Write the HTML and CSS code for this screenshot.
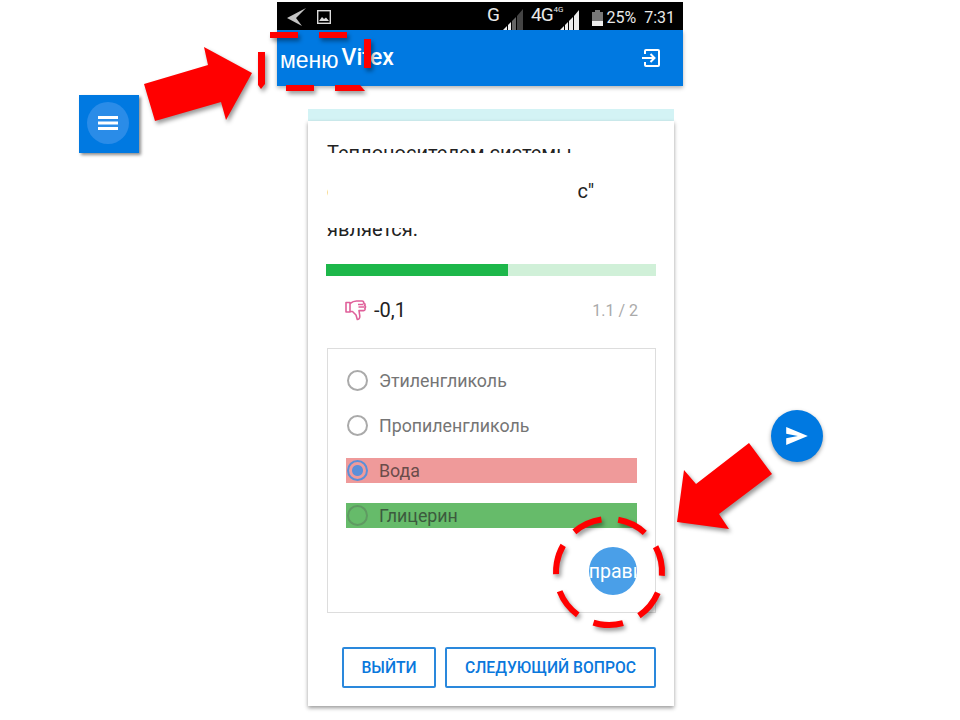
FILE: index.html
```html
<!DOCTYPE html>
<html lang="ru">
<head>
    <meta charset="UTF-8">
    <meta name="viewport" content="width=device-width, initial-scale=1.0">
    <title>Vitex</title>
    <link rel="stylesheet" href="styles.css">
</head>
<body>
    <div class="phone">
        <!-- Статус-бар -->
        <div class="status-bar">
            <svg class="back-icon" width="20" height="20" viewBox="0 0 20 20"><path d="M19 1 L0 11 L15 19 L9 11 Z" fill="#c4c4c4"/></svg>
            <svg class="pic-icon" width="14" height="14" viewBox="0 0 14 14"><rect x="0.7" y="0.7" width="12.6" height="12.6" fill="none" stroke="#ddd" stroke-width="1.4"/><path d="M2 11 L5 7 L7 9 L9 7.5 L12 11 Z" fill="#ddd"/></svg>
            <span class="status-g">G</span>
            <svg class="signal-a" width="20" height="22" viewBox="0 0 20 22"><path d="M0 22 L4 18 L4 22 Z" fill="#eee"/><path d="M5 17 L8 14 L8 22 L5 22 Z" fill="#eee"/><path d="M9 13 L13 9 L13 22 L9 22 Z" fill="#666"/><path d="M14 8 L20 1 L20 22 L14 22 Z" fill="#444"/></svg>
            <span class="status-4g">4G</span>
            <span class="status-4g-small">4G</span>
            <svg class="signal-b" width="20" height="22" viewBox="0 0 20 22"><path d="M0 22 L4 18 L4 22 Z" fill="#eee"/><path d="M5 17 L8 14 L8 22 L5 22 Z" fill="#eee"/><path d="M9 13 L13 9 L13 22 L9 22 Z" fill="#eee"/><path d="M14 8 L19 2 L19 22 L14 22 Z" fill="#eee"/></svg>
            <svg class="battery" width="11" height="16" viewBox="0 0 11 16"><rect x="3" y="0" width="5" height="2" fill="#777"/><rect x="0" y="2" width="11" height="14" fill="#777"/><rect x="0" y="11" width="11" height="5" fill="#eee"/></svg>
            <span class="status-text status-pct">25%</span>
            <span class="status-text status-time">7:31</span>
        </div>

        <!-- Шапка -->
        <div class="app-bar">
            <span class="menu-label">меню</span>
            <span class="brand">Vitex</span>
            <svg class="exit-icon" width="20" height="18" viewBox="0 0 20 18" fill="none" stroke="#fff" stroke-width="2"><path d="M4 5 V2 a1 1 0 0 1 1 -1 H17 a1 1 0 0 1 1 1 V16 a1 1 0 0 1 -1 1 H5 a1 1 0 0 1 -1 -1 V13"/><path d="M1 9 H13"/><path d="M9.5 5 L13.5 9 L9.5 13"/></svg>
        </div>

        <div class="strip"></div>

        <!-- Карточка вопроса -->
        <div class="card">
            <div class="question">
                <div class="q-line">Теплоносителем системы</div>
                <div class="q-line q-split"><span>с</span><span>с"</span></div>
                <div class="q-line">является.</div>
                <div class="q-cover"></div>
            </div>

            <div class="progress"><div class="progress-fill" style="width: 55%"></div></div>

            <div class="score-row">
                <svg class="thumb" width="22" height="22" viewBox="0 0 22 22" fill="none" stroke="#e0609a" stroke-width="1.6" stroke-linejoin="round"><path d="M1 3.5 H5 V13 H1 Z"/><path d="M5 4.5 C7 3 9 2 11.5 2 H17 C18.5 2 19 3 18.5 4 C20 4.2 20.5 5.5 19.6 6.5 C20.8 7 20.8 8.6 19.8 9.2 C20.5 10 20 11.6 18.6 11.6 H14 L14.8 17 C15 19.5 13.5 20.5 12.3 20.5 L11 16 L7.5 12.5 H5"/><path d="M13 5.5 H18.5 M13.5 8 H19.5"/></svg>
                <span class="score">-0,1</span>
                <span class="counter">1.1 / 2</span>
            </div>

            <div class="answers">
                <div class="option"><span class="radio"></span>Этиленгликоль</div>
                <div class="option"><span class="radio"></span>Пропиленгликоль</div>
                <div class="option option-wrong"><span class="radio radio-on"></span>Вода</div>
                <div class="option option-right"><span class="radio"></span>Глицерин</div>
                <div class="send-fab"><span>Отправить</span></div>
            </div>

            <div class="actions">
                <button class="btn btn-exit">ВЫЙТИ</button>
                <button class="btn btn-next">СЛЕДУЮЩИЙ ВОПРОС</button>
            </div>
        </div>
    </div>

    <!-- Кнопки-подсказки сбоку -->
    <div class="hint-menu">
        <div class="hint-menu-circle">
            <svg width="20" height="14" viewBox="0 0 20 14" fill="#fff"><rect y="0" width="20" height="3"/><rect y="5.5" width="20" height="3"/><rect y="11" width="20" height="3"/></svg>
        </div>
    </div>
    <div class="hint-send">
        <svg width="22" height="18" viewBox="0 0 24 20"><path d="M0 0 L24 10 L0 20 L0 12.5 L13 10 L0 7.5 Z" fill="#fff"/></svg>
    </div>

    <!-- Стрелки и пунктир поверх скриншота -->
    <svg class="marks" width="960" height="720" viewBox="0 0 960 720">
        <g fill="#f00">
            <polygon points="144,84 155,121 221,102 226,120 252,73 204,47 208,65"/>
            <polygon points="749,443 772,474 719,514 729,529 677,522 684,470 696,484"/>
            <polygon points="258,52 265,52 265,84 261,89 258,85"/>
            <rect x="270" y="32" width="28" height="6"/>
            <rect x="319" y="32" width="28" height="6"/>
            <rect x="364" y="39" width="7" height="29"/>
            <rect x="286" y="85" width="28" height="6"/>
            <polygon points="335,85 360,85 365,91 335,91"/>
        </g>
        <circle cx="609" cy="572" r="53" fill="none" stroke="#f00" stroke-width="6" stroke-dasharray="30 17.6" transform="rotate(-80 609 572)"/>
    </svg>
</body>
</html>
```

FILE: styles.css
```css
body {
    margin: 0;
    width: 960px;
    height: 720px;
    position: relative;
    overflow: hidden;
    background-color: #fff;
    font-family: Roboto, "Liberation Sans", sans-serif;
}

.phone {
    width: 406px;
    margin-left: 277px;
    padding-top: 2px;
}

/* status bar */
.status-bar {
    height: 28px;
    background-color: #000;
    color: #e8e8e8;
    display: flex;
    align-items: center;
    position: relative;
}

.back-icon {
    margin-left: 10px;
    margin-top: 2px;
}

.pic-icon {
    margin-left: 10px;
    margin-top: 1px;
}

.status-g {
    font-size: 19px;
    margin-left: 156px;
    margin-top: -4px;
}

.signal-a {
    margin-left: 3px;
    margin-top: 5px;
}

.status-4g {
    font-size: 19px;
    margin-left: 8px;
    margin-top: -4px;
    letter-spacing: -1px;
}

.status-4g-small {
    font-size: 8px;
    margin-top: -14px;
    margin-left: 1px;
}

.signal-b {
    margin-left: -4px;
    margin-top: 5px;
}

.battery {
    margin-left: 12px;
    margin-top: 3px;
}

.status-text {
    font-size: 16px;
    margin-top: 2px;
}

.status-pct {
    margin-left: 4px;
}

.status-time {
    margin-left: 8px;
}

/* app bar */
.app-bar {
    height: 56px;
    background-color: #0079e1;
    color: #fff;
    display: flex;
    align-items: center;
    box-shadow: 0 2px 4px rgba(0, 0, 0, 0.3);
}

.menu-label {
    font-family: "Liberation Sans", sans-serif;
    font-size: 23px;
    margin-left: 3px;
    margin-top: 5px;
}

.brand {
    font-size: 23px;
    font-weight: 500;
    margin-left: 3px;
    margin-top: -1px;
}

.exit-icon {
    margin-left: auto;
    margin-right: 22px;
    margin-top: -1px;
}

.strip {
    height: 12px;
    background-color: #d3f3f5;
    margin: 23px 9px 0 31px;
}

/* card */
.card {
    width: 366px;
    height: 585px;
    margin-left: 31px;
    box-sizing: border-box;
    padding: 13px 18px 0;
    background-color: #fff;
    box-shadow: 0 2px 4px rgba(0, 0, 0, 0.4);
}

.question {
    position: relative;
    padding-left: 1px;
    font-size: 20px;
    line-height: 38px;
    color: #222;
    height: 114px;
}

.q-split {
    display: flex;
    gap: 240px;
}

.q-cover {
    position: absolute;
    left: 2px;
    top: 19px;
    width: 250px;
    height: 75px;
    background-color: #fff;
}

.progress {
    height: 12px;
    margin-top: 16px;
    background-color: #d0f0d8;
}

.progress-fill {
    height: 100%;
    background-color: #1db74a;
}

.score-row {
    display: flex;
    align-items: center;
    height: 28px;
    margin-top: 20px;
    padding: 0 18px 0 19px;
}

.thumb {
    margin-right: 7px;
}

.score {
    font-size: 20px;
    color: #222;
}

.counter {
    margin-left: auto;
    font-size: 16px;
    color: #aaa;
}

.answers {
    position: relative;
    height: 265px;
    box-sizing: border-box;
    margin: 24px 0 0 1px;
    padding: 19px 18px 0;
    border: 1px solid #ddd;
    display: flex;
    flex-direction: column;
    gap: 20px;
}

.option {
    height: 25px;
    display: flex;
    align-items: center;
    gap: 11px;
    font-size: 17.8px;
    color: #757575;
}

.radio {
    width: 17px;
    height: 17px;
    margin-left: 1px;
    border: 2px solid #aaa;
    border-radius: 50%;
    flex-shrink: 0;
}

.radio-on {
    border-color: #5b8fd8;
    background: radial-gradient(circle, #5b8fd8 0 5px, transparent 6px);
}

.option-wrong {
    background-color: #ef9a9a;
    color: #6a4c4a;
}

.option-right {
    background-color: #66bb6a;
    color: #3c5a3e;
}

.option-right .radio {
    border-color: #5f9a62;
}

.send-fab {
    position: absolute;
    left: 261px;
    top: 198px;
    width: 48px;
    height: 48px;
    border-radius: 50%;
    background-color: #4a9fe8;
    color: #fff;
    font-size: 19.5px;
    display: flex;
    align-items: center;
    justify-content: center;
    overflow: hidden;
    white-space: nowrap;
}

.send-fab span {
    margin-left: 4px;
}

.actions {
    display: flex;
    justify-content: flex-end;
    gap: 9px;
    margin-top: 34px;
}

.btn {
    height: 41px;
    padding: 0;
    background-color: #fff;
    border: 2px solid #2a88dc;
    border-radius: 2px;
    color: #0a78dc;
    font-family: Roboto, sans-serif;
    font-size: 15.7px;
    font-weight: 500;
}

.btn-exit {
    width: 94px;
}

.btn-next {
    width: 211px;
}

/* hints left and right of the phone */
.hint-menu {
    position: absolute;
    left: 79px;
    top: 95px;
    width: 60px;
    height: 58px;
    box-sizing: border-box;
    padding: 0 2px 2px 0;
    background-color: #0079e1;
    box-shadow: 2px 2px 3px rgba(0, 0, 0, 0.45);
    display: flex;
    align-items: center;
    justify-content: center;
}

.hint-menu-circle {
    width: 42px;
    height: 42px;
    border-radius: 50%;
    background-color: #2a8ce8;
    display: flex;
    align-items: center;
    justify-content: center;
}

.hint-send {
    position: absolute;
    left: 771px;
    top: 410px;
    width: 52px;
    height: 52px;
    border-radius: 50%;
    background-color: #0079e1;
    box-shadow: 0 2px 4px rgba(0, 0, 0, 0.35);
    display: flex;
    align-items: center;
    justify-content: center;
}

.marks {
    position: absolute;
    left: 0;
    top: 0;
    filter: drop-shadow(2px 3px 2px rgba(0, 0, 0, 0.4));
}
```
